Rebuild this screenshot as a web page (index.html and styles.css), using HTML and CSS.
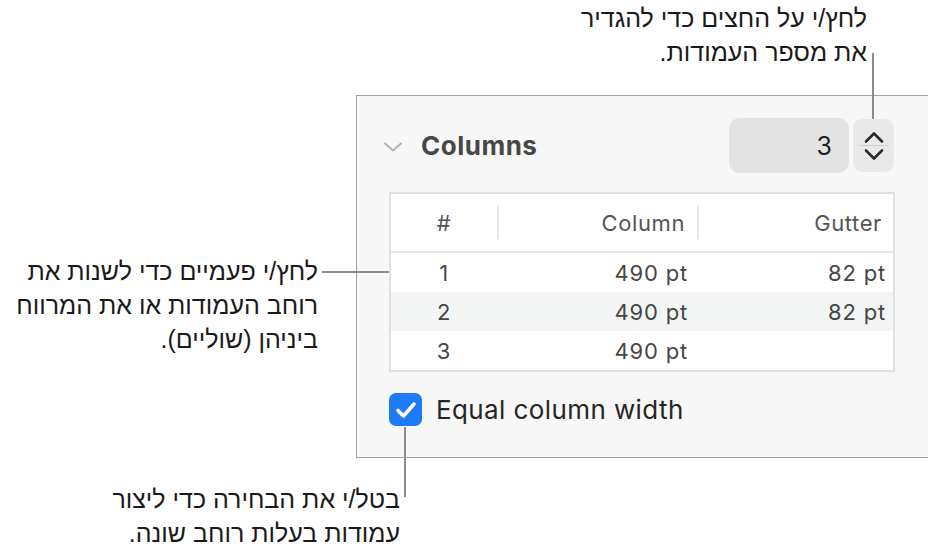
FILE: index.html
```html
<!DOCTYPE html>
<html lang="he">
<head>
<meta charset="utf-8">
<title>Columns</title>
<link rel="stylesheet" href="styles.css">
</head>
<body>
<div class="canvas">
  <div class="panel">
    <div class="section-head">
      <svg class="disclosure" width="20" height="12" viewBox="0 0 20 12"><path d="M2 2.5 L10 9.5 L18 2.5" fill="none" stroke="#b3b3b3" stroke-width="2" stroke-linecap="round" stroke-linejoin="round"/></svg>
      <span class="section-title">Columns</span>
      <span class="spacer"></span>
      <div class="num-field">3</div>
      <div class="stepper">
        <svg class="step-up" width="22" height="14" viewBox="0 0 22 14"><path d="M3 11.5 L11 3.5 L19 11.5" fill="none" stroke="#2b2b2b" stroke-width="2.6" stroke-linecap="round" stroke-linejoin="round"/></svg>
        <span class="step-div"></span>
        <svg class="step-down" width="22" height="14" viewBox="0 0 22 14"><path d="M3 2.5 L11 10.5 L19 2.5" fill="none" stroke="#2b2b2b" stroke-width="2.6" stroke-linecap="round" stroke-linejoin="round"/></svg>
      </div>
    </div>
    <div class="table">
      <div class="thead">
        <div class="th c-num">#</div>
        <div class="sep"></div>
        <div class="th c-col">Column</div>
        <div class="sep"></div>
        <div class="th c-gut">Gutter</div>
      </div>
      <div class="tr">
        <div class="td c-num">1</div>
        <div class="td c-col">490 pt</div>
        <div class="td c-gut">82 pt</div>
      </div>
      <div class="tr striped">
        <div class="td c-num">2</div>
        <div class="td c-col">490 pt</div>
        <div class="td c-gut">82 pt</div>
      </div>
      <div class="tr">
        <div class="td c-num">3</div>
        <div class="td c-col">490 pt</div>
        <div class="td c-gut"></div>
      </div>
    </div>
    <label class="check-row">
      <span class="checkbox">
        <svg width="24" height="20" viewBox="0 0 24 20"><path d="M4 10.5 L9.5 16 L20 4" fill="none" stroke="#ffffff" stroke-width="3.6" stroke-linecap="round" stroke-linejoin="round"/></svg>
      </span>
      <span class="check-label">Equal column width</span>
    </label>
  </div>

  <div class="callout callout-top" dir="rtl">לחץ/י על החצים כדי להגדיר<br>את מספר העמודות.</div>
  <div class="callout callout-left" dir="rtl">לחץ/י פעמיים כדי לשנות את<br>רוחב העמודות או את המרווח<br>ביניהן (שוליים).</div>
  <div class="callout callout-bottom" dir="rtl">בטל/י את הבחירה כדי ליצור<br>עמודות בעלות רוחב שונה.</div>

  <span class="leader leader-top"></span>
  <span class="leader leader-left"></span>
  <span class="leader leader-bottom"></span>
</div>
</body>
</html>
```
FILE: styles.css
```css
* { box-sizing: border-box; }
html, body {
  margin: 0;
  padding: 0;
  background: #ffffff;
}
body {
  width: 928px;
  height: 551px;
  overflow: hidden;
  font-family: Inter, "Liberation Sans", sans-serif;
}
.canvas {
  position: relative;
  width: 928px;
  height: 551px;
  padding-top: 95px;
  padding-left: 356px;
}

/* Panel */
.panel {
  width: 590px;
  height: 363px;
  background: #f7f7f7;
  border: 1px solid #a3a3a3;
  padding: 22px 0 0 32px;
}
.section-head {
  display: flex;
  align-items: center;
  width: 505px;
  height: 55px;
}
.disclosure {
  margin-left: -6px;
  margin-right: 18px;
  margin-top: 2px;
}
.section-title {
  font-size: 26px;
  font-weight: 700;
  color: #474747;
  letter-spacing: 0.5px;
}
.spacer { flex: 1; }
.num-field {
  width: 120px;
  height: 55px;
  border-radius: 11px;
  background: #e3e3e3;
  font-size: 25px;
  color: #1f1f1f;
  display: flex;
  align-items: center;
  justify-content: flex-end;
  padding-right: 17px;
}
.stepper {
  margin-left: 4px;
  width: 41px;
  height: 53px;
  border-radius: 9px;
  background: #e9e9e9;
  display: flex;
  flex-direction: column;
  align-items: center;
  justify-content: center;
}
.step-div {
  display: block;
  width: 30px;
  height: 1px;
  background: #cfcfcf;
  margin: 1px 0 2px;
}

/* Table */
.table {
  margin-top: 19px;
  width: 506px;
  background: #ffffff;
  border: 2px solid #e2e2e2;
  color: #464646;
  font-size: 22px;
}
.thead {
  display: flex;
  align-items: center;
  height: 59px;
  border-bottom: 2px solid #e4e4e4;
  color: #555555;
  letter-spacing: 0.6px;
}
.sep {
  width: 2px;
  height: 33px;
  background: #e6e6e6;
}
.tr {
  display: flex;
  align-items: center;
  height: 39px;
  letter-spacing: 0.8px;
}
.tr.striped { background: #f3f4f4; }
.c-num { width: 106px; text-align: center; }
.c-col { width: 198px; text-align: right; }
.c-gut { flex: 1; text-align: right; }
.th.c-col { padding-right: 12px; }
.th.c-gut { padding-right: 11px; }
.td.c-num { width: 106px; }
.td.c-col { width: 200px; padding-right: 9px; }
.td.c-gut { padding-right: 7px; }

/* Checkbox */
.check-row {
  display: flex;
  align-items: center;
  margin-top: 21px;
}
.checkbox {
  width: 33px;
  height: 33px;
  border-radius: 7px;
  background: #1d7bf6;
  display: flex;
  align-items: center;
  justify-content: center;
}
.check-label {
  margin-left: 14px;
  font-size: 26px;
  letter-spacing: 0.4px;
  color: #262626;
}

/* Callouts */
.callout {
  position: absolute;
  font-family: "Liberation Sans", "DejaVu Sans", sans-serif;
  font-size: 25px;
  line-height: 34px;
  color: #1a1a1a;
  text-align: right;
  white-space: nowrap;
}
.callout-top { right: 61px; top: 1px; }
.callout-left { right: 610px; top: 254px; }
.callout-bottom { right: 528px; top: 482px; }

.leader {
  position: absolute;
  background: #8c8c8c;
}
.leader-top { left: 872px; top: 53px; width: 2px; height: 66px; }
.leader-left { left: 322px; top: 271px; width: 67px; height: 2px; }
.leader-bottom { left: 404px; top: 427px; width: 2px; height: 70px; }
```
